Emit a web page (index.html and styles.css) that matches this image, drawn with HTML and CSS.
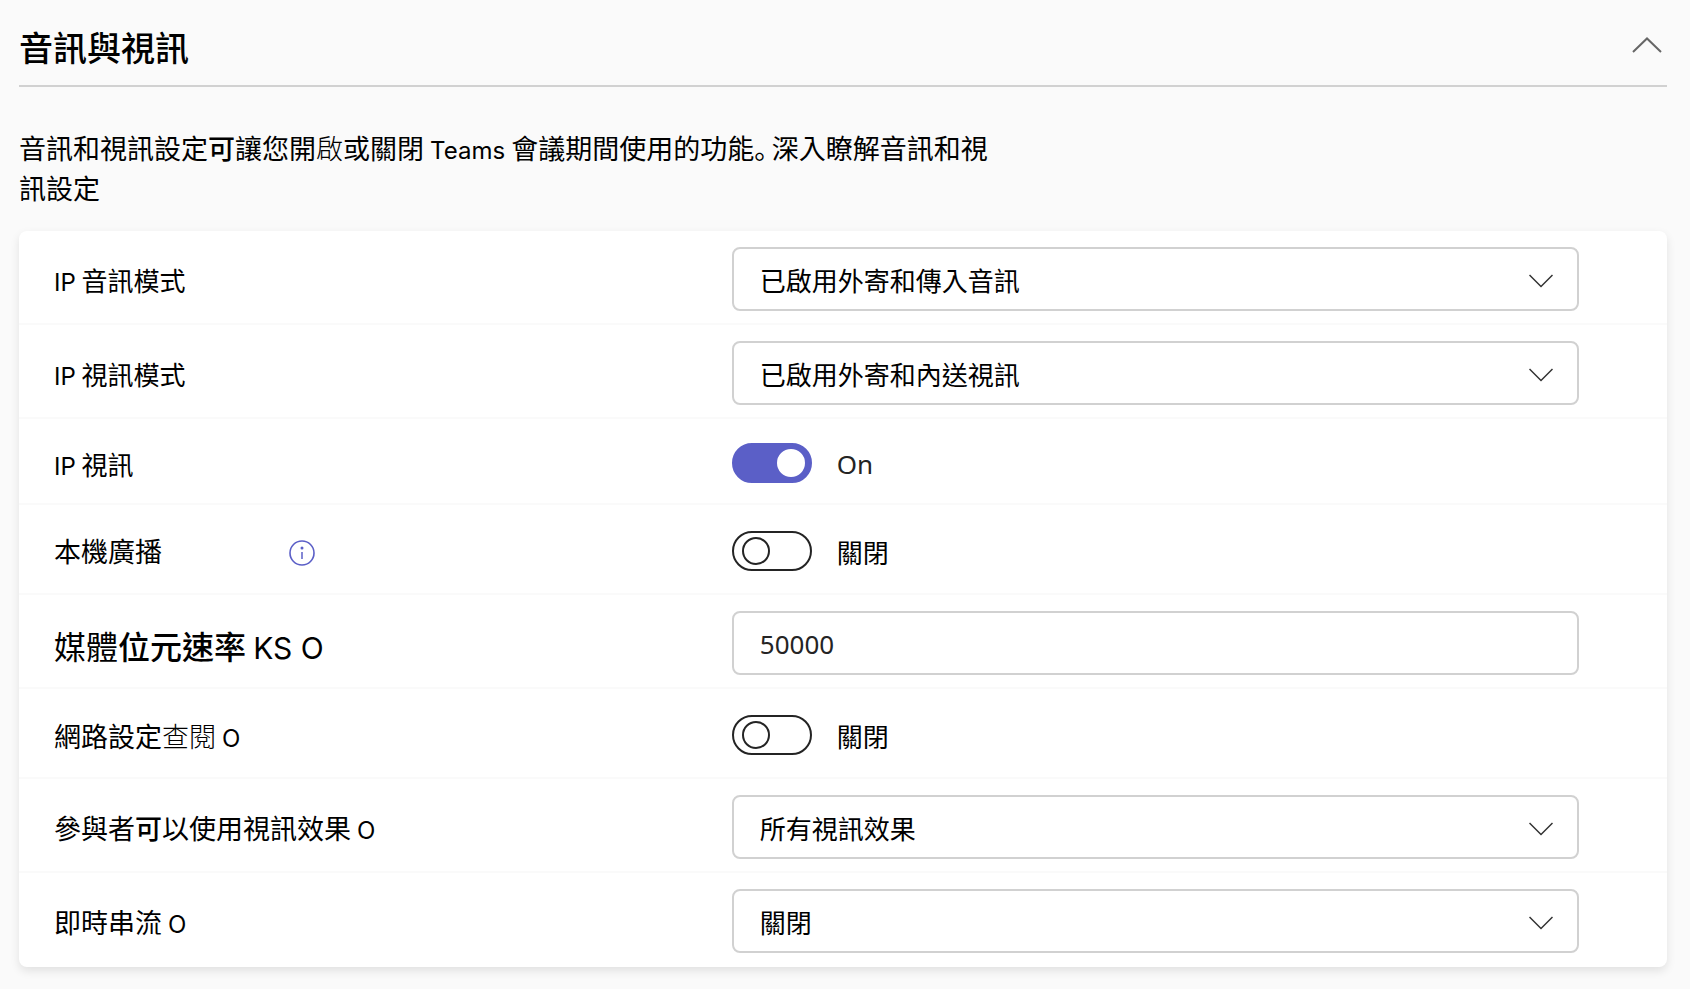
FILE: index.html
```html
<!DOCTYPE html>
<html lang="zh-Hant">
<head>
<meta charset="utf-8">
<meta name="viewport" content="width=device-width, initial-scale=1">
<title>音訊與視訊</title>
<link rel="stylesheet" href="styles.css">
</head>
<body>
<main class="section">
  <header class="section-header">
    <h1 class="section-title">音訊與視訊</h1>
    <button class="collapse" type="button" aria-label="收合" aria-expanded="true">
      <svg width="30" height="16" viewBox="0 0 30 16" fill="none" stroke="#666" stroke-width="2" aria-hidden="true"><path d="M1 15 15 1.5 29 15"/></svg>
    </button>
  </header>

  <p class="intro">音訊和視訊設定<span class="strong">可</span>讓您開<span class="thin">啟</span>或關閉 <span class="latin">Teams</span> 會議期間使用的功能<span class="stop" lang="zh-Hans">。</span>深入瞭解音訊和視訊設定</p>

  <form class="card">
    <div class="row">
      <label class="label label-small" for="audio-mode"><span class="latin">IP</span> 音訊模式</label>
      <div class="select">
        <select id="audio-mode" class="field"><option>已啟用外寄和傳入音訊</option></select>
        <svg class="chevron" width="24" height="14" viewBox="0 0 24 14" aria-hidden="true"><path d="M.5 1 12 12.5 23.5 1"/></svg>
      </div>
    </div>
    <div class="row">
      <label class="label label-small" for="video-mode"><span class="latin">IP</span> 視訊模式</label>
      <div class="select">
        <select id="video-mode" class="field"><option>已啟用外寄和內送視訊</option></select>
        <svg class="chevron" width="24" height="14" viewBox="0 0 24 14" aria-hidden="true"><path d="M.5 1 12 12.5 23.5 1"/></svg>
      </div>
    </div>
    <div class="row row-tight">
      <label class="label label-small" for="ip-video"><span class="latin">IP</span> 視訊</label>
      <div class="toggle">
        <input id="ip-video" class="switch" type="checkbox" role="switch" checked>
        <span class="state state-latin">On</span>
      </div>
    </div>
    <div class="row row-loose">
      <div class="label label-info">
        <label for="broadcast">本機廣播</label>
        <button class="info" type="button" aria-label="資訊">
          <svg width="26" height="26" viewBox="0 0 26 26" aria-hidden="true"><circle cx="13" cy="13" r="12" fill="none" stroke="#5b5fc7" stroke-width="1.6"/><circle cx="13" cy="8" r="1.5" fill="#5b5fc7"/><path d="M13 12v7" stroke="#5b5fc7" stroke-width="1.5"/></svg>
        </button>
      </div>
      <div class="toggle">
        <input id="broadcast" class="switch" type="checkbox" role="switch">
        <span class="state">關閉</span>
      </div>
    </div>
    <div class="row">
      <label class="label label-large" for="bitrate">媒體<span class="strong">位元速率</span> <span class="latin">KS O</span></label>
      <input id="bitrate" class="field field-number" type="text" inputmode="numeric" value="50000">
    </div>
    <div class="row row-loose">
      <label class="label" for="network">網路設定<span class="thin">查閱</span> <span class="latin">O</span></label>
      <div class="toggle">
        <input id="network" class="switch" type="checkbox" role="switch">
        <span class="state">關閉</span>
      </div>
    </div>
    <div class="row">
      <label class="label" for="effects">參與者<span class="strong">可</span>以使用視訊效果 <span class="latin">O</span></label>
      <div class="select">
        <select id="effects" class="field"><option>所有視訊效果</option></select>
        <svg class="chevron" width="24" height="14" viewBox="0 0 24 14" aria-hidden="true"><path d="M.5 1 12 12.5 23.5 1"/></svg>
      </div>
    </div>
    <div class="row">
      <label class="label" for="streaming">即時串流 <span class="latin">O</span></label>
      <div class="select">
        <select id="streaming" class="field"><option>關閉</option></select>
        <svg class="chevron" width="24" height="14" viewBox="0 0 24 14" aria-hidden="true"><path d="M.5 1 12 12.5 23.5 1"/></svg>
      </div>
    </div>
  </form>
</main>
</body>
</html>
```
FILE: styles.css
```css
*, *::before, *::after { box-sizing: border-box; }

body {
  margin: 0;
  background: #fafafa;
  color: #000;
  font-family: "Noto Sans CJK TC", sans-serif;
  font-size: 26px;
  line-height: 40px;
}

.section { padding: 18px 23px 23px 19px; }

.section-header {
  display: flex;
  align-items: center;
  justify-content: space-between;
  height: 69px;
  padding-bottom: 9px;
  border-bottom: 2px solid #d1d1d1;
}

.section-title {
  margin: 0;
  font-size: 34px;
  font-weight: 500;
}

.collapse, .info {
  display: flex;
  padding: 0;
  border: 0;
  background: none;
  cursor: pointer;
}
.collapse { margin: 0 5px 4px 0; }

.intro {
  max-width: 980px;
  margin: 41px 0 23px;
  font-size: 27px;
}
.latin {
  font-family: Inter, sans-serif;
  font-size: 24px;
  line-height: 1;
}
.stop {
  margin-right: 4px;
  font-family: "Noto Sans CJK SC", sans-serif;
  font-feature-settings: "halt";
}
.strong { font-weight: 500; }
.thin { font-weight: 300; }

.card {
  border-radius: 8px;
  background: #fff;
  box-shadow: 0 4px 10px rgba(0, 0, 0, .1);
}

.row {
  display: grid;
  grid-template-columns: 4fr 5fr;
  align-items: center;
  padding: 16px 88px 12px 35px;
  border-bottom: 2px solid #fafafa;
}
.row:last-child { border-bottom-color: transparent; }
.row-tight { padding-top: 24px; padding-bottom: 20px; }
.row-loose { padding-top: 26px; padding-bottom: 22px; }

.label {
  padding-top: 2px;
  font-size: 27px;
  line-height: 36px;
}
.label-small { font-size: 26px; }
.label-large {
  padding-top: 4px;
  font-size: 32px;
}
.label-large .latin { font-size: 30px; }
.label-info {
  display: flex;
  align-items: center;
  padding-top: 0;
  gap: 127px;
}
.info { padding-top: 4px; }

.select { position: relative; }

.field {
  display: block;
  width: 100%;
  height: 64px;
  padding: 1px 26px 0;
  border: 2px solid #d1d1d1;
  border-radius: 8px;
  background: #fff;
  color: #000;
  font: inherit;
  appearance: none;
}
.field-number {
  color: #242424;
  font-family: "Noto Sans", sans-serif;
}

.chevron {
  position: absolute;
  top: 27px;
  right: 26px;
  fill: none;
  stroke: #333;
  stroke-width: 1.5;
  pointer-events: none;
}

.toggle {
  display: flex;
  align-items: center;
  gap: 25px;
}

.switch {
  display: flex;
  align-items: center;
  width: 80px;
  height: 40px;
  margin: 0;
  padding: 0 8px;
  border: 2px solid #242424;
  border-radius: 20px;
  appearance: none;
}
.switch::before {
  content: "";
  width: 28px;
  height: 28px;
  border: 2px solid #242424;
  border-radius: 50%;
}
.switch:checked {
  justify-content: flex-end;
  padding: 0 5px;
  border-color: #5b5fc7;
  background: #5b5fc7;
}
.switch:checked::before {
  border-color: #fff;
  background: #fff;
}

.state {
  height: 40px;
  padding-top: 2px;
  line-height: 38px;
}
.state-latin {
  color: #242424;
  font-family: "Noto Sans", sans-serif;
}
```
